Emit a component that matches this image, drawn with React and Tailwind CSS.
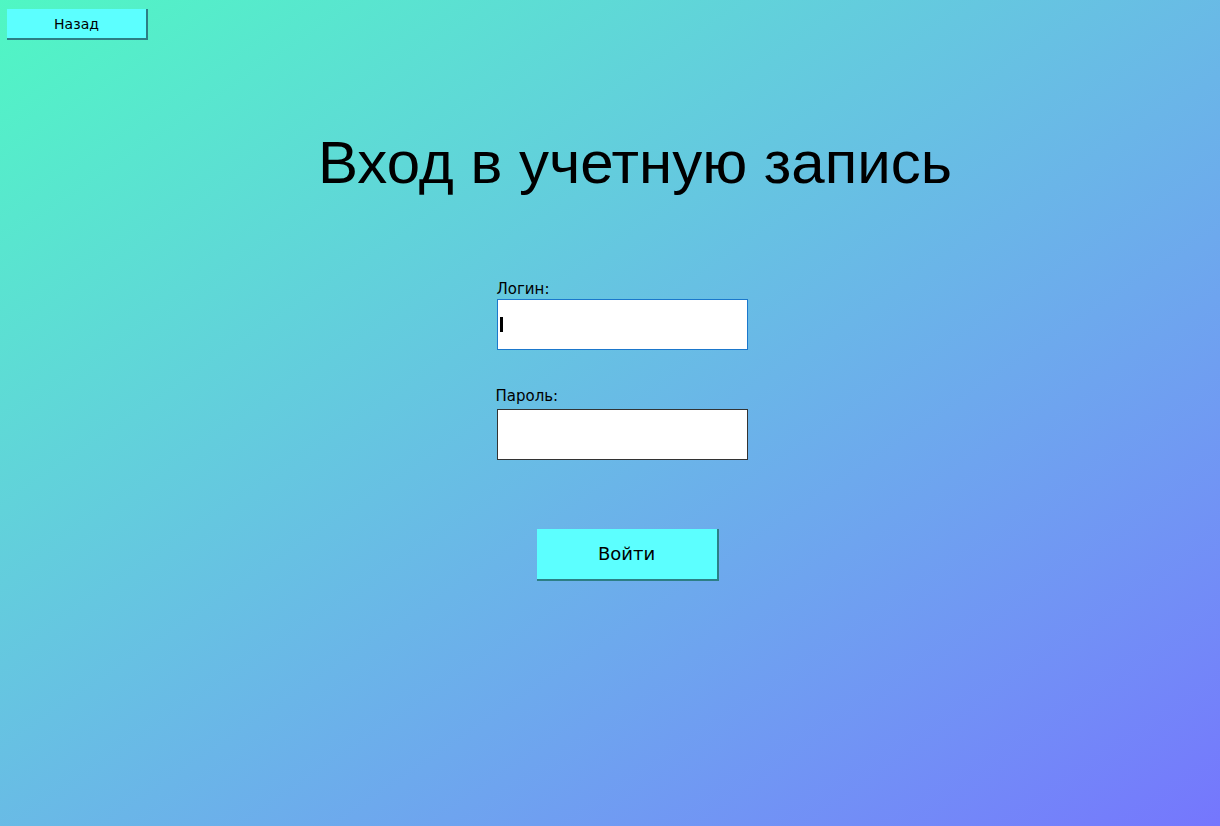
import React, { useState } from "react";

export default function App() {
  const [login, setLogin] = useState("");
  const [password, setPassword] = useState("");

  return (
    <div className="w-full h-[826px] overflow-hidden bg-gradient-to-br from-[#4ff7c3] to-[#7576fd] font-['DejaVu_Sans',sans-serif] text-black">
      <div className="pt-[9px] pl-[7px]">
        <button className="w-[141px] h-[31px] bg-[#5cffff] border-r-2 border-b-2 border-[#2c7f86] text-[14px] leading-none">
          Назад
        </button>
      </div>

      <div className="flex flex-col items-center pl-[24px]">
        <h1 className="mt-[93px] ml-[26px] font-['Liberation_Sans',Arial,sans-serif] text-[60px] leading-none font-normal">
          Вход в учетную запись
        </h1>

        <div className="mt-[88px] flex flex-col w-[251px]">
          <label className="text-[15px] leading-[17px]">Логин:</label>
          <div className="mt-[1px] h-[51px] bg-white border border-[#1b78cc] flex items-center pl-[2px]">
            <span className="w-[3px] h-[15px] bg-black" />
            <input
              className="flex-1 h-full outline-none px-1 text-[16px]"
              value={login}
              onChange={(e) => setLogin(e.target.value)}
            />
          </div>

          <label className="mt-[38px] text-[15px] leading-[17px] -ml-[1px]">Пароль:</label>
          <input
            type="password"
            className="mt-[4px] h-[51px] bg-white border border-[#333] outline-none px-1"
            value={password}
            onChange={(e) => setPassword(e.target.value)}
          />
        </div>

        <button className="mt-[69px] ml-[11px] w-[182px] h-[52px] bg-[#5cffff] border-r-2 border-b-2 border-[#2c7f86] text-[18px] leading-none">
          Войти
        </button>
      </div>
    </div>
  );
}
